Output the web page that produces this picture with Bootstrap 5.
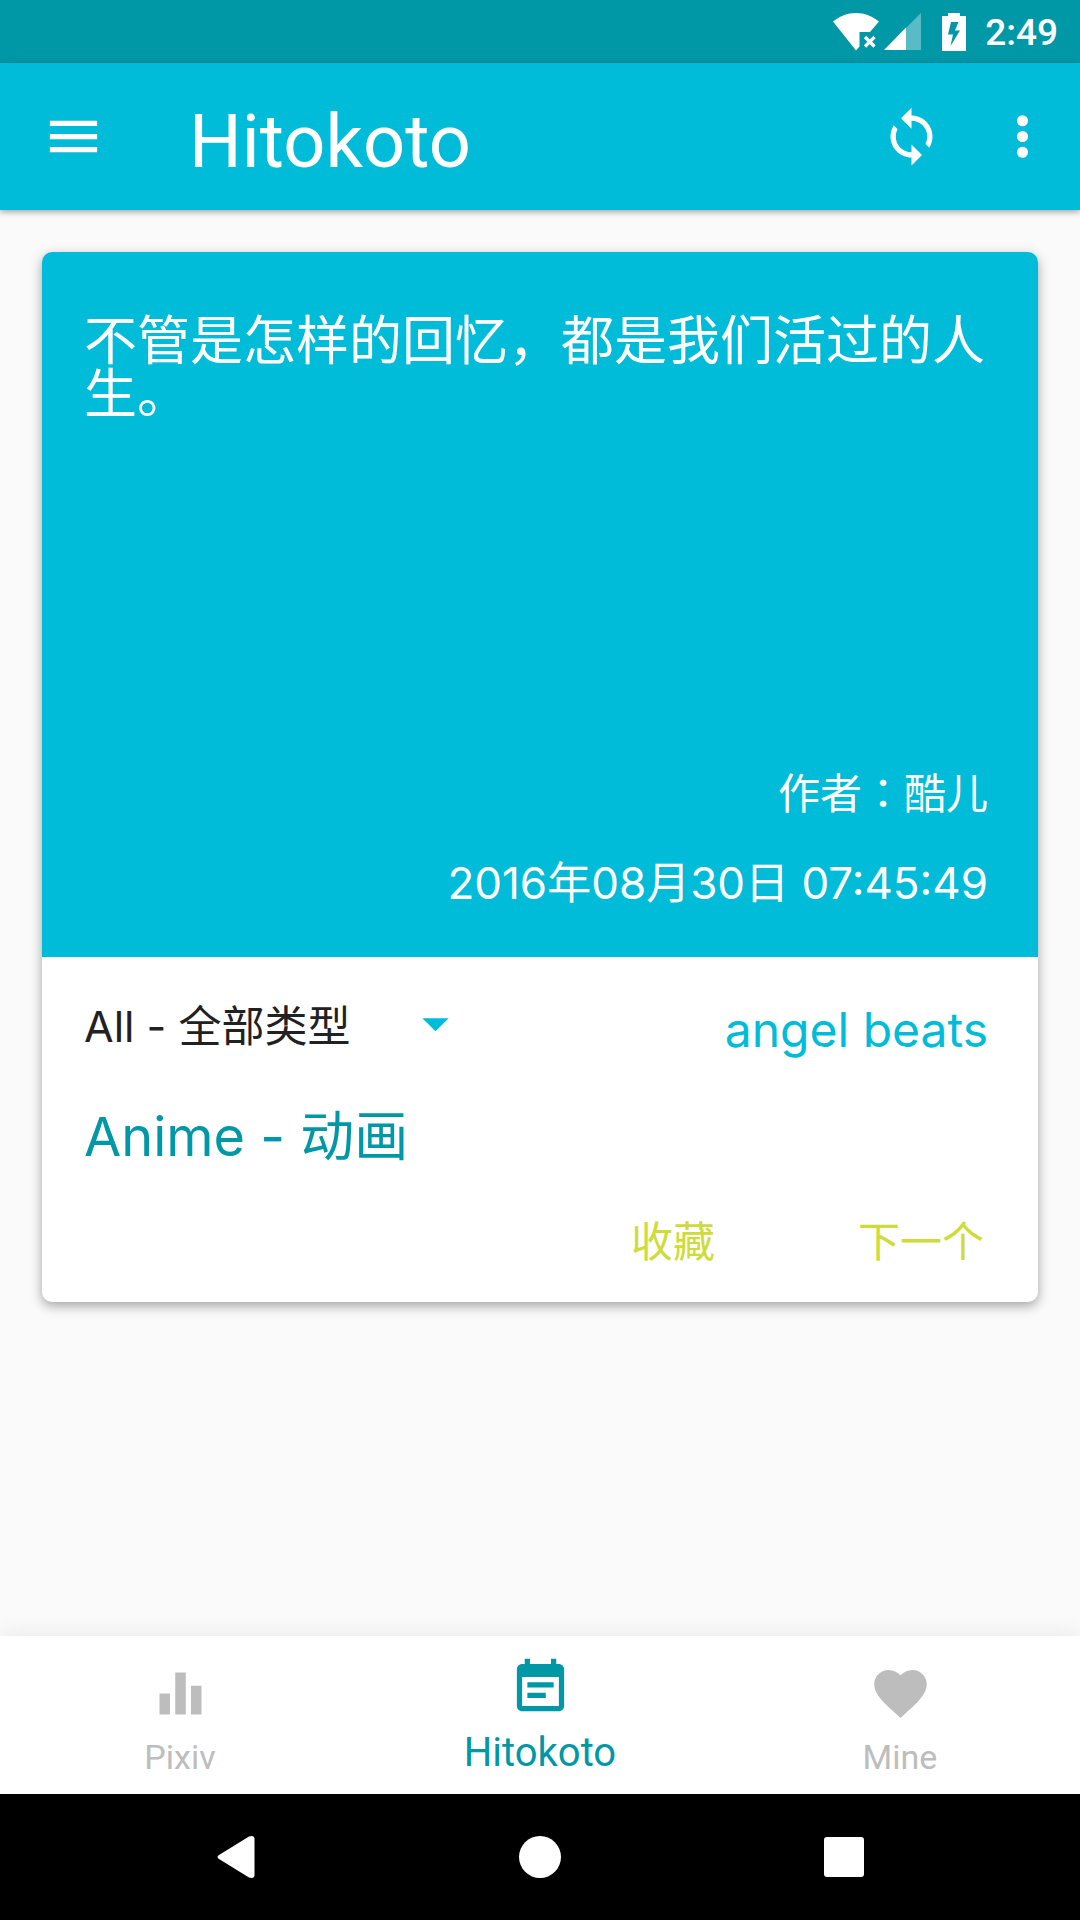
<!DOCTYPE html>
<html lang="zh-CN">
<head>
<meta charset="utf-8">
<meta name="viewport" content="width=device-width, initial-scale=1">
<title>Hitokoto</title>
<link href="https://cdn.jsdelivr.net/npm/bootstrap@5.3.0/dist/css/bootstrap.min.css" rel="stylesheet">
<style>
  :root {
    --app-primary: #00bcd9;
    --app-dark: #0097a7;
    --app-accent: #cddc39;
  }
  body {
    background: #fafafa;
    color: #212121;
    font-family: Roboto, "Noto Sans CJK SC", sans-serif;
  }
  svg { display: block; fill: currentColor; }
  .icon-lg { width: 63px; height: 63px; }
  .status-bar { background: var(--app-dark); height: 63px; padding: 0 22px; }
  .status-time { font-size: 37px; line-height: 40px; font-weight: 500; margin-left: 19px; padding-top: 2px; }
  .battery { margin-left: 21px; }
  .app-bar {
    background: var(--app-primary);
    min-height: 147px;
    padding: 0 26px 0 42px;
    box-shadow: 0 2px 6px rgba(0, 0, 0, .35);
  }
  .app-title { font-size: 74px; line-height: 84px; font-weight: 400; margin-left: 84px; padding-top: 10px; }
  .app-actions { gap: 48px; }
  .app-main { padding: 42px; }
  .quote-card {
    border-radius: 10px;
    box-shadow: 0 4px 12px rgba(0, 0, 0, .35);
    font-family: Inter, "Noto Sans CJK SC", sans-serif;
  }
  .quote-top {
    background: var(--app-primary);
    min-height: 705px;
    padding: 63px 50px 44px 42px;
    border-radius: 10px 10px 0 0;
  }
  .quote-text { font-size: 53px; line-height: 53px; }
  .quote-meta { line-height: 60px; gap: 32px; }
  .quote-author { font-family: "Noto Sans CJK TC", sans-serif; font-size: 42px; }
  .quote-date { font-size: 44px; }
  .quote-bottom { padding: 35px 50px 30px 42px; }
  .type-picker { width: 383px; }
  .type-picker select {
    appearance: none;
    background: none;
    color: inherit;
    font-size: 43px;
    height: 68px;
  }
  .type-picker svg { width: 63px; pointer-events: none; color: var(--app-primary); }
  .quote-source { font-size: 48px; line-height: 76px; color: var(--app-primary); }
  .quote-kind { font-size: 54px; line-height: 60px; color: var(--app-dark); margin: 39px 0 45px; }
  .quote-actions { gap: 143px; }
  .quote-actions button { color: var(--app-accent); font-size: 42px; line-height: 60px; }
  .tab-bar { background: #fff; min-height: 158px; box-shadow: 0 -4px 20px rgba(0, 0, 0, .06); }
  .tab-item { color: #bdbdbd; font-size: 34px; line-height: 40px; gap: 12px; padding-top: 26px; }
  .tab-item.active { color: var(--app-dark); font-size: 40px; gap: 14px; padding-top: 20px; }
  .system-bar { background: #000; height: 126px; padding: 0 84px; }
</style>
<script src="https://cdn.jsdelivr.net/npm/bootstrap@5.3.0/dist/js/bootstrap.bundle.min.js"></script>
</head>
<body class="d-flex flex-column min-vh-100">

<div class="status-bar d-flex align-items-center justify-content-end text-white">
  <svg width="47" height="38" viewBox="0 0 47 38" role="img" aria-label="Wi-Fi">
    <path d="M0 8.500C6.500 3.300 14.500 0 23 0s16.500 3.300 23 8.500L37 19H26.500v14.500L23 37.500Z"/>
    <path d="M32 24l9.500 9.500M41.500 24L32 33.500" fill="none" stroke="currentColor" stroke-width="3.200"/>
  </svg>
  <svg class="ms-1" width="37" height="37" viewBox="0 0 37 37" role="img" aria-label="Signal">
    <path d="M37 0v37H22V15Z" opacity=".35"/><path d="M22 14.500V37H0Z"/>
  </svg>
  <svg class="battery" width="24" height="38" viewBox="0 0 24 38" role="img" aria-label="Battery charging">
    <path fill-rule="evenodd" d="M6 0h12v3h6v35H0V3h6ZM9 9L6 21.500h5L8.500 33 18 17.500h-5L16.500 9Z"/>
  </svg>
  <span class="status-time">2:49</span>
</div>

<header class="app-bar d-flex align-items-center text-white position-relative">
  <button type="button" class="btn p-0 border-0 text-white" aria-label="Menu">
    <svg class="icon-lg" viewBox="0 0 24 24"><path d="M3 18h18v-2H3v2zm0-5h18v-2H3v2zm0-7v2h18V6H3z"/></svg>
  </button>
  <h1 class="app-title mb-0">Hitokoto</h1>
  <div class="app-actions d-flex ms-auto">
    <button type="button" class="btn p-0 border-0 text-white" aria-label="Refresh">
      <svg class="icon-lg" viewBox="0 0 24 24"><path d="M12 4V1L8 5l4 4V6c3.310 0 6 2.690 6 6 0 1.010-.250 1.970-.700 2.800l1.460 1.460C19.540 15.030 20 13.570 20 12c0-4.420-3.580-8-8-8zm0 14c-3.310 0-6-2.690-6-6 0-1.010.250-1.970.700-2.800L5.240 7.740C4.460 8.970 4 10.430 4 12c0 4.420 3.580 8 8 8v3l4-4-4-4v3z"/></svg>
    </button>
    <button type="button" class="btn p-0 border-0 text-white" aria-label="More options">
      <svg class="icon-lg" viewBox="0 0 24 24"><circle cx="12" cy="6" r="2.100"/><circle cx="12" cy="12" r="2.100"/><circle cx="12" cy="18" r="2.100"/></svg>
    </button>
  </div>
</header>

<main class="app-main flex-grow-1">
  <article class="quote-card card border-0">
    <div class="quote-top d-flex flex-column text-white">
      <p class="quote-text mb-0">不管是怎样的回忆，都是我们活过的人生。</p>
      <div class="quote-meta d-flex flex-column align-items-end mt-auto">
        <span class="quote-author" lang="zh-TW">作者：酷儿</span>
        <time class="quote-date" datetime="2016-08-30T07:45:49">2016年08月30日 07:45:49</time>
      </div>
    </div>
    <div class="quote-bottom">
      <div class="d-flex justify-content-between align-items-start">
        <div class="type-picker position-relative">
          <select class="w-100 border-0 p-0" aria-label="类型">
            <option selected>All - 全部类型</option>
            <option>Anime - 动画</option>
          </select>
          <svg class="position-absolute end-0 top-0 h-100" viewBox="0 0 24 24"><path d="M7 9l5 5 5-5z"/></svg>
        </div>
        <span class="quote-source">angel beats</span>
      </div>
      <p class="quote-kind">Anime - 动画</p>
      <div class="quote-actions d-flex justify-content-end pe-1">
        <button type="button" class="btn p-0 border-0">收藏</button>
        <button type="button" class="btn p-0 border-0">下一个</button>
      </div>
    </div>
  </article>
</main>

<nav class="tab-bar d-flex" aria-label="Sections">
  <a href="#pixiv" class="tab-item col d-flex flex-column align-items-center text-decoration-none">
    <svg class="icon-lg" viewBox="0 0 24 24"><path d="M10 20h4V4h-4v16zm-6 0h4v-8H4v8zM16 9v11h4V9h-4z"/></svg>
    <span>Pixiv</span>
  </a>
  <a href="#hitokoto" class="tab-item active col d-flex flex-column align-items-center text-decoration-none" aria-current="page">
    <svg class="icon-lg" viewBox="0 0 24 24"><path d="M17 10H7v2h10v-2zm2-7h-1V1h-2v2H8V1H6v2H5c-1.110 0-1.990.900-1.990 2L3 19c0 1.100.890 2 2 2h14c1.100 0 2-.900 2-2V5c0-1.100-.900-2-2-2zm0 16H5V8h14v11zm-5-5H7v2h7v-2z"/></svg>
    <span>Hitokoto</span>
  </a>
  <a href="#mine" class="tab-item col d-flex flex-column align-items-center text-decoration-none">
    <svg class="icon-lg" viewBox="0 0 24 24"><path d="M12 21.350l-1.450-1.320C5.400 15.360 2 12.280 2 8.500 2 5.420 4.420 3 7.500 3c1.740 0 3.410.810 4.500 2.090C13.090 3.810 14.760 3 16.500 3 19.580 3 22 5.420 22 8.500c0 3.780-3.400 6.860-8.550 11.540L12 21.350z"/></svg>
    <span>Mine</span>
  </a>
</nav>

<div class="system-bar d-flex align-items-center">
  <button type="button" class="btn p-0 border-0 text-white col d-flex justify-content-center" aria-label="Back">
    <svg width="42" height="42" viewBox="0 0 42 42"><path d="M4 19L34 .500Q39.500-1 39.500 3V39Q39.500 43 34 41.500L4 23Q1 21 4 19Z"/></svg>
  </button>
  <button type="button" class="btn p-0 border-0 text-white col d-flex justify-content-center" aria-label="Home">
    <svg width="42" height="42" viewBox="0 0 42 42"><circle cx="21" cy="21" r="21"/></svg>
  </button>
  <button type="button" class="btn p-0 border-0 text-white col d-flex justify-content-center" aria-label="Recent apps">
    <svg width="42" height="42" viewBox="0 0 42 42"><rect x="1" y="1" width="40" height="40" rx="3"/></svg>
  </button>
</div>

</body>
</html>
